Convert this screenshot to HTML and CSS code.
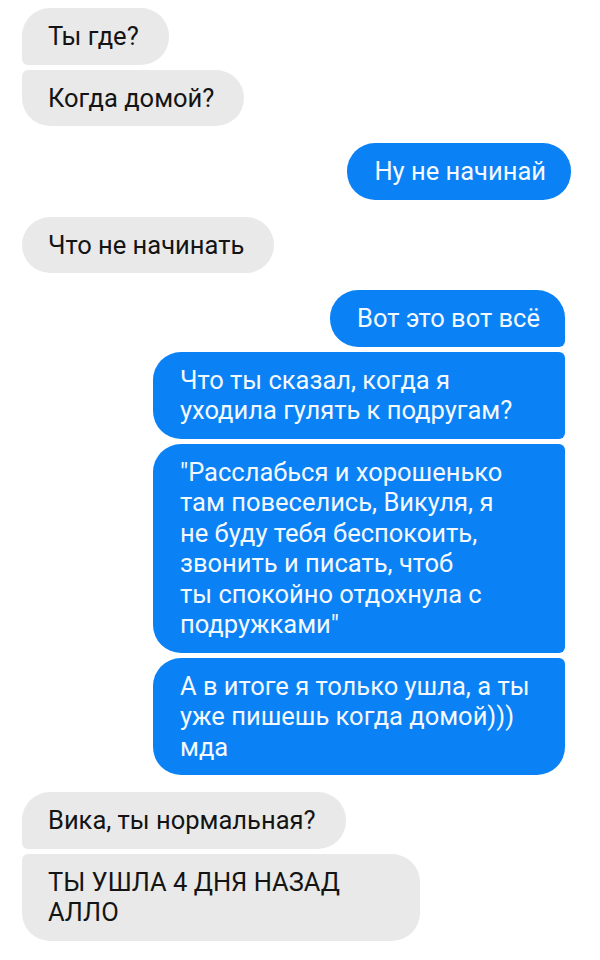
FILE: index.html
```html
<!DOCTYPE html>
<html lang="ru">
<head>
    <meta charset="UTF-8">
    <meta name="viewport" content="width=device-width, initial-scale=1.0">
    <title>Переписка</title>
    <link rel="stylesheet" href="styles.css">
</head>
<body>
    <div class="chat">
        <div class="group in">
            <div class="msg">Ты где?</div>
            <div class="msg">Когда домой?</div>
        </div>

        <div class="group out out-shift">
            <div class="msg">Ну не начинай</div>
        </div>

        <div class="group in">
            <div class="msg">Что не начинать</div>
        </div>

        <div class="group out">
            <div class="msg">Вот это вот всё</div>
            <div class="msg wide">Что ты сказал, когда я<br>уходила гулять к подругам?</div>
            <div class="msg wide">"Расслабься и хорошенько<br>там повеселись, Викуля, я<br>не буду тебя беспокоить,<br>звонить и писать, чтоб<br>ты спокойно отдохнула с<br>подружками"</div>
            <div class="msg wide">А в итоге я только ушла, а ты<br>уже пишешь когда домой)))<br>мда</div>
        </div>

        <div class="group in">
            <div class="msg">Вика, ты нормальная?</div>
            <div class="msg wide">ТЫ УШЛА 4 ДНЯ НАЗАД<br>АЛЛО</div>
        </div>
    </div>
</body>
</html>
```

FILE: styles.css
```css
body {
    margin: 0;
    background: #ffffff;
    font-family: Roboto, "Noto Sans", sans-serif;
}
.chat {
    display: flex;
    flex-direction: column;
    gap: 17px;
    padding: 8px 35px 0 22px;
}
.group {
    display: flex;
    flex-direction: column;
    gap: 5px;
}
.msg {
    padding: 13px 30px 13px 26px;
    font-size: 25.5px;
    line-height: 30.5px;
    border-radius: 28px;
    box-sizing: border-box;
}
.msg.wide {
    width: 412px;
}

/* входящие - серые слева */
.in {
    align-items: flex-start;
}
.in .msg {
    background: #e9e9e9;
    color: #141414;
}
.in .msg:not(:last-child) {
    border-bottom-left-radius: 6px;
}
.in .msg:not(:first-child) {
    border-top-left-radius: 6px;
}
.in .msg.wide {
    width: 398px;
}

/* исходящие - синие справа */
.out {
    align-items: flex-end;
}
.out .msg {
    background: #0a82f5;
    color: #f4f9ff;
    padding: 13px 25px 13px 27px;
}
.out .msg:not(:last-child) {
    border-bottom-right-radius: 6px;
}
.out .msg:not(:first-child) {
    border-top-right-radius: 6px;
}
.out-shift {
    margin-right: -6px;
}
```
